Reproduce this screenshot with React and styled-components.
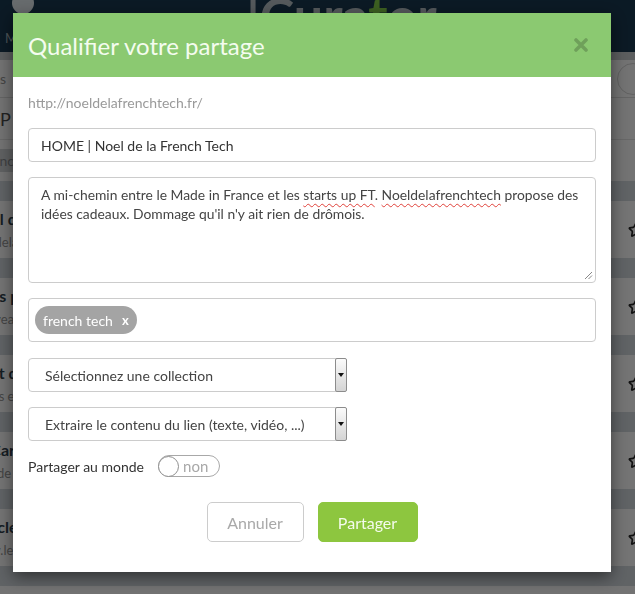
import React from "react";
import styled, { createGlobalStyle } from "styled-components";
import { Star } from "lucide-react";

const GlobalStyle = createGlobalStyle`
  html, body {
    margin: 0;
    padding: 0;
    height: 100%;
    overflow: hidden;
    font-family: Lato, "Open Sans", "Liberation Sans", sans-serif;
  }
`;

/* ---------- page under the dialog ---------- */

const Page = styled.div`
  width: 100%;
  height: 594px;
  background: #e6e6e6;
  overflow: hidden;
`;

const NavBar = styled.div`
  height: 52px;
  background: #17344a;
  display: flex;
  align-items: flex-start;
  overflow: hidden;
`;

const Avatar = styled.div`
  width: 22px;
  height: 22px;
  border-radius: 50%;
  background: #cfd6da;
  margin: -8px 0 0 12px;
`;

const NavMenu = styled.span`
  color: #9aa7b0;
  font-size: 13px;
  margin: 30px 0 0 -29px;
`;

const Logo = styled.div`
  margin: -16px 0 0 208px;
  font-size: 52px;
  font-weight: 700;
  color: #aab3b8;

  span {
    color: #79c043;
  }
`;

const SubBar = styled.div`
  height: 8px;
  background: #b8bcbe;
`;

const Toolbar = styled.div`
  height: 37px;
  display: flex;
  align-items: center;
  justify-content: space-between;
  border-bottom: 1px solid #c9c9c9;
  color: #888;
  font-size: 14px;
`;

const Round = styled.div`
  width: 30px;
  height: 30px;
  border-radius: 50%;
  border: 1px solid #c3c3c3;
  margin-right: -14px;
`;

const FilterRow = styled.div`
  height: 41px;
  display: flex;
  align-items: center;
  border-bottom: 1px solid #cfcfcf;
  font-size: 18px;
  color: #444;
`;

const ChipRow = styled.div`
  height: 41px;
  display: flex;
  align-items: center;
`;

const Chip = styled.div`
  background: #bfc2c4;
  color: #7f8386;
  font-size: 14px;
  padding: 3px 10px 3px 0;
  margin-left: -20px;
`;

const Band = styled.div`
  height: 20px;
  background: #c0c6cb;
`;

const Row = styled.div`
  height: 57px;
  display: flex;
  align-items: center;
  justify-content: space-between;
  background: #e9e9e9;
`;

const RowText = styled.div`
  display: flex;
  flex-direction: column;
  gap: 6px;
  margin-left: -30px;
`;

const RowTitle = styled.div`
  font-weight: 700;
  font-size: 16px;
  color: #2b3a46;
`;

const RowSub = styled.div`
  font-size: 13px;
  color: #8a8a8a;
`;

const RowStar = styled.div`
  margin-right: -9px;
  color: #222;
  display: flex;
`;

const Backdrop = styled.div`
  position: fixed;
  inset: 0;
  background: rgba(0, 0, 0, 0.5);
`;

/* ---------- dialog ---------- */

const Modal = styled.div`
  position: fixed;
  top: 13px;
  left: 13px;
  width: 598px;
  background: #fff;
  box-shadow: 0 5px 15px rgba(0, 0, 0, 0.5);
`;

const Header = styled.div`
  height: 64px;
  background: #8bc971;
  display: flex;
  align-items: center;
  justify-content: space-between;
  padding: 0 23px 0 15px;
`;

const Title = styled.h4`
  margin: 0;
  font-size: 24px;
  font-weight: 400;
  color: #f4fcef;
`;

const Close = styled.svg`
  display: block;
`;

const Body = styled.div`
  padding: 16px 15px 30px;
`;

const Url = styled.div`
  font-size: 14px;
  line-height: 20px;
  color: #9a9a9a;
  margin-bottom: 15px;
`;

const Field = styled.div`
  box-sizing: border-box;
  height: ${(p) => p.$h || 34}px;
  width: ${(p) => (p.$w ? `${p.$w}px` : "100%")};
  border: 1px solid #cccccc;
  border-radius: 4px;
  margin-bottom: ${(p) => p.$mb ?? 15}px;
  font-size: 14px;
  color: #333;
`;

const TextInput = styled(Field)`
  display: flex;
  align-items: center;
  padding: 0 12px;
`;

const TextArea = styled(Field)`
  position: relative;
  padding: 7px 8px 7px 12px;
  font-size: 13.85px;
  line-height: 19px;
  color: #444;
`;

const Misspelt = styled.span`
  text-decoration: underline wavy #e0413a;
  text-decoration-thickness: 1px;
  text-underline-offset: 3px;
`;

const Grip = styled.svg`
  position: absolute;
  right: 2px;
  bottom: 2px;
`;

const TagBox = styled(Field)`
  display: flex;
  align-items: center;
  padding: 0 6px;
  margin-bottom: 16px;
`;

const Tag = styled.span`
  height: 28px;
  display: inline-flex;
  align-items: center;
  gap: 9px;
  padding: 0 8px;
  border-radius: 14px;
  background: #a4a4a4;
  color: #fff;
  font-size: 14px;

  b {
    font-size: 13px;
  }
`;

const Select = styled(Field)`
  display: flex;
  align-items: center;
  justify-content: space-between;
  padding-left: 16px;
  color: #444;
`;

const Spinner = styled.div`
  box-sizing: border-box;
  width: 12px;
  height: 34px;
  margin-right: -1px;
  border: 1px solid #8c8c8c;
  border-radius: 2px;
  background: linear-gradient(#fbfbfb, #d4d4d4);
  display: flex;
  align-items: center;
  justify-content: center;

  &::after {
    content: "";
    border-left: 3px solid transparent;
    border-right: 3px solid transparent;
    border-top: 4px solid #111;
  }
`;

const ToggleRow = styled.div`
  display: flex;
  align-items: center;
  gap: 14px;
  height: 22px;
  margin-top: 14px;
  font-size: 14px;
  color: #333;
`;

const Toggle = styled.div`
  box-sizing: border-box;
  width: 62px;
  height: 22px;
  border: 1px solid #a8a8a8;
  border-radius: 11px;
  display: flex;
  align-items: center;
  gap: 4px;
  color: #a8a8a8;
  font-size: 15px;
`;

const Knob = styled.div`
  box-sizing: border-box;
  width: 21px;
  height: 21px;
  margin-left: -1px;
  border-radius: 50%;
  border: 1.5px solid #8e8e8e;
  background: #fff;
`;

const Actions = styled.div`
  display: flex;
  justify-content: center;
  gap: 14px;
  margin-top: 25px;
`;

const Button = styled.button`
  box-sizing: border-box;
  height: 40px;
  width: ${(p) => p.$w}px;
  border-radius: 5px;
  font-family: inherit;
  font-size: 16px;
  border: 1px solid ${(p) => (p.$primary ? "#8dc63f" : "#cccccc")};
  background: ${(p) => (p.$primary ? "#8dc63f" : "#fff")};
  color: ${(p) => (p.$primary ? "#f4fbec" : "#a9a9a9")};
`;

const rows = [
  ["Noel de la French Tech", "noeldelafrenchtech.fr"],
  ["Apps pour les startups", "Nouveautés du jour"],
  ["Bout du monde", "Outils et ressources"],
  ["La Carte des Curateurs", "asdf de la semaine"],
  ["Article | Le point", "www.le.point.fr"],
];

export default function App() {
  return (
    <>
      <GlobalStyle />
      <Page>
        <NavBar>
          <Avatar />
          <NavMenu>Menu</NavMenu>
          <Logo>
            |Cura<span>t</span>or
          </Logo>
        </NavBar>
        <SubBar />
        <Toolbar>
          <span>s</span>
          <Round />
        </Toolbar>
        <FilterRow>P</FilterRow>
        <ChipRow>
          <Chip>French tech</Chip>
        </ChipRow>
        {rows.map(([t, s]) => (
          <React.Fragment key={t}>
            <Band />
            <Row>
              <RowText>
                <RowTitle>{t}</RowTitle>
                <RowSub>{s}</RowSub>
              </RowText>
              <RowStar>
                <Star size={16} strokeWidth={2.5} />
              </RowStar>
            </Row>
          </React.Fragment>
        ))}
        <Band />
      </Page>
      <Backdrop />

      <Modal>
        <Header>
          <Title>Qualifier votre partage</Title>
          <Close width="14" height="14" viewBox="0 0 14 14">
            <path
              d="M2 2 L12 12 M12 2 L2 12"
              stroke="rgba(0,0,0,0.2)"
              strokeWidth="3.6"
              strokeLinecap="round"
            />
          </Close>
        </Header>
        <Body>
          <Url>http://noeldelafrenchtech.fr/</Url>
          <TextInput>HOME | Noel de la French Tech</TextInput>
          <TextArea $h={106}>
            A mi-chemin entre le Made in France et les{" "}
            <Misspelt>starts up FT</Misspelt>. <Misspelt>Noeldelafrenchtech</Misspelt>{" "}
            propose des idées cadeaux. Dommage qu'il n'y ait rien de drômois.
            <Grip width="10" height="10" viewBox="0 0 10 10">
              <path d="M9 2 L2 9 M9 5.5 L5.5 9" stroke="#888" strokeWidth="1" />
            </Grip>
          </TextArea>
          <TagBox $h={44}>
            <Tag>
              french tech <b>x</b>
            </Tag>
          </TagBox>
          <Select $w={319}>
            Sélectionnez une collection
            <Spinner />
          </Select>
          <Select $w={319} $mb={0}>
            Extraire le contenu du lien (texte, vidéo, ...)
            <Spinner />
          </Select>
          <ToggleRow>
            Partager au monde
            <Toggle>
              <Knob />
              non
            </Toggle>
          </ToggleRow>
          <Actions>
            <Button $w={97}>Annuler</Button>
            <Button $w={100} $primary>
              Partager
            </Button>
          </Actions>
        </Body>
      </Modal>
    </>
  );
}
